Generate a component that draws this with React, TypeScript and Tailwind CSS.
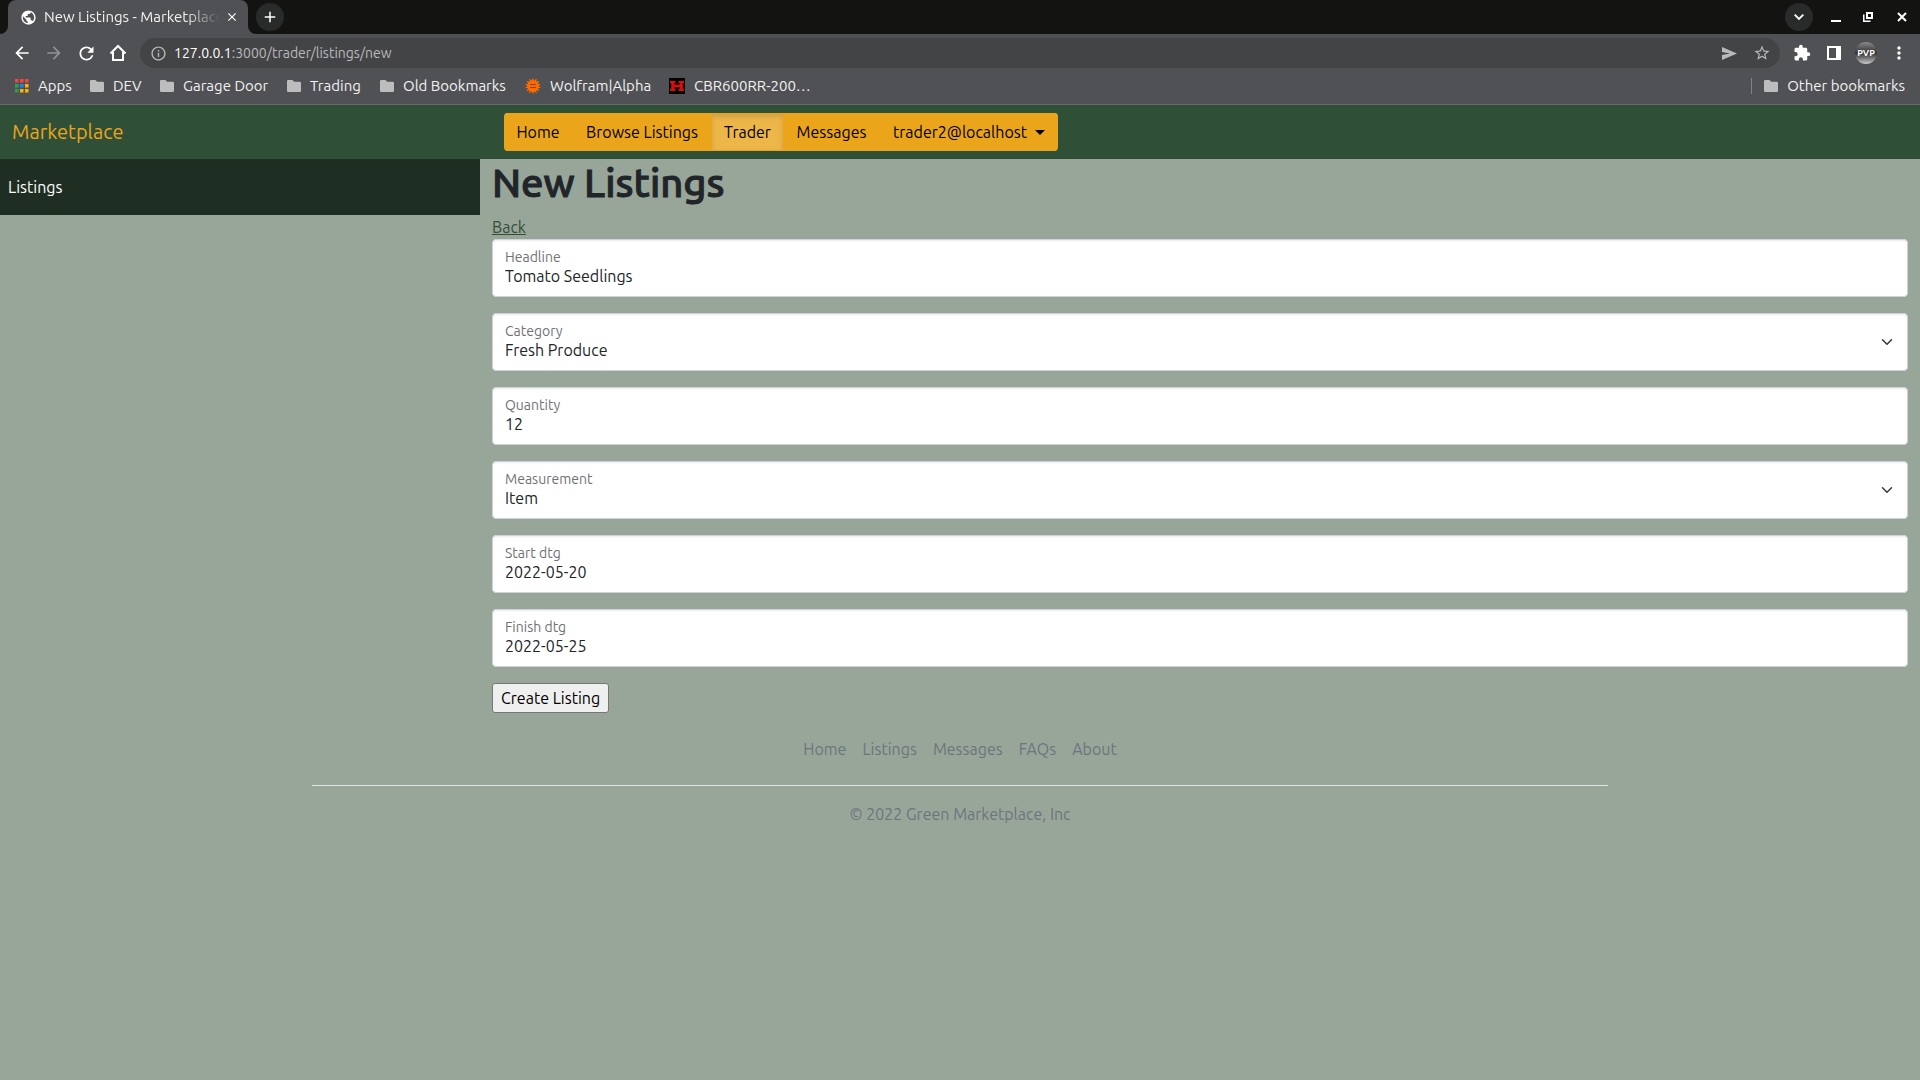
import type { ReactNode } from "react";
import {
  MdAdd,
  MdArrowBack,
  MdArrowForward,
  MdClose,
  MdExtension,
  MdInfoOutline,
  MdMoreVert,
  MdPublic,
  MdRefresh,
  MdStarBorder,
} from "react-icons/md";

function FolderIcon() {
  return (
    <svg width="14" height="12" viewBox="0 0 14 12" fill="#bdbdbd" aria-hidden="true">
      <path d="M1.2 0h4.3l1.6 1.8h5.7A1.2 1.2 0 0 1 14 3v7.8a1.2 1.2 0 0 1-1.2 1.2H1.2A1.2 1.2 0 0 1 0 10.8V1.2A1.2 1.2 0 0 1 1.2 0z" />
    </svg>
  );
}

const appDots = [
  ["#f2453d", "#f2453d", "#f2453d"],
  ["#2ba24c", "#1a82f7", "#fbb208"],
  ["#2ba24c", "#fbb208", "#fbb208"],
];

function AppsIcon() {
  return (
    <svg width="14" height="14" viewBox="0 0 14 14" aria-hidden="true">
      {appDots.map((row, y) =>
        row.map((fill, x) => <rect key={`${x}-${y}`} x={x * 5} y={y * 5} width="3.5" height="3.5" fill={fill} />),
      )}
    </svg>
  );
}

function WolframIcon() {
  const points = Array.from({ length: 28 }, (_, i) => {
    const r = i % 2 === 0 ? 8.2 : 5.4;
    const a = (Math.PI * i) / 14;
    return `${(8 + r * Math.sin(a)).toFixed(2)},${(8 - r * Math.cos(a)).toFixed(2)}`;
  }).join(" ");
  return (
    <svg width="16" height="16" viewBox="0 0 16 16" aria-hidden="true">
      <polygon points={points} fill="#ff6a00" />
      <path d="M5 6.5h6M5 9.500h6" stroke="#8a4510" strokeWidth="1" />
    </svg>
  );
}

function HondaIcon() {
  return (
    <svg width="16" height="16" viewBox="0 0 16 16" aria-hidden="true">
      <rect width="16" height="16" fill="#000" />
      <path
        d="M1 3h5.500v2H5.500v1.800h5V5h-1V3H15v2h-1.200v6H15v2H9.500v-2h1V9h-5v2h1v2H1v-2h1.200V5H1z"
        fill="#e00a0a"
      />
    </svg>
  );
}

function Bookmark({ icon, label, width }: { icon: ReactNode; label: string; width: string }) {
  return (
    <a href="#" className={`flex shrink-0 items-center whitespace-nowrap ${width}`}>
      <span className="flex shrink-0 justify-center">{icon}</span>
      <span className="ml-[9px]">{label}</span>
    </a>
  );
}

function BrowserChrome() {
  return (
    <header className="bg-[#505154] text-[15px] text-[#f1f1f1]">
      <div className="flex h-[34px] items-center bg-[#131411]">
        <div className="flex h-full items-end">
          <svg width="8" height="8" viewBox="0 0 8 8" fill="#505154" aria-hidden="true">
            <path d="M8 0v8H0a8 8 0 0 0 8-8z" />
          </svg>
          <div className="flex h-full w-[240px] items-center rounded-t-lg bg-[#505154] pr-2 pl-3">
            <MdPublic size={17} className="shrink-0 text-white" />
            <span className="ml-[7px] w-[176px] overflow-hidden mask-r-from-80% mask-r-to-100% whitespace-nowrap">
              New Listings - Marketplace
            </span>
            <button type="button" aria-label="Close tab" className="ml-[5px]">
              <MdClose size={14} className="text-white" />
            </button>
          </div>
          <svg width="8" height="8" viewBox="0 0 8 8" fill="#505154" aria-hidden="true">
            <path d="M0 0v8h8a8 8 0 0 1-8-8z" />
          </svg>
        </div>
        <button
          type="button"
          aria-label="New tab"
          className="flex size-7 items-center justify-center rounded-full bg-[#292b2b]"
        >
          <MdAdd size={18} className="text-white" />
        </button>
        <div className="ml-auto flex items-center pr-[13px]">
          <button
            type="button"
            aria-label="Search tabs"
            className="mr-[18px] flex size-7 items-center justify-center rounded-full bg-[#292b2b]"
          >
            <svg width="10" height="6" viewBox="0 0 10 6" fill="none" stroke="#fff" strokeWidth="1.8" aria-hidden="true">
              <path d="M.7.7 5 5 9.3.7" />
            </svg>
          </button>
          <button type="button" aria-label="Minimize" className="mr-[22px]">
            <svg width="10" height="10" viewBox="0 0 10 10" fill="#fff" aria-hidden="true">
              <path d="M0 8h10v2H0z" />
            </svg>
          </button>
          <button type="button" aria-label="Restore" className="mr-6">
            <svg width="10" height="10" viewBox="0 0 10 10" aria-hidden="true">
              <path d="M4 1h5v5H4z" fill="none" stroke="#fff" strokeWidth="2" />
              <path d="M0 2.500h1.500v6H7.500V10H0z" fill="#fff" />
            </svg>
          </button>
          <button type="button" aria-label="Close window">
            <svg width="10" height="10" viewBox="0 0 10 10" stroke="#fff" strokeWidth="2" aria-hidden="true">
              <path d="m1 1 8 8M9 1 1 9" />
            </svg>
          </button>
        </div>
      </div>

      <div className="flex h-[38px] items-center pl-3">
        <div className="flex items-center gap-3 text-white">
          <button type="button" aria-label="Back">
            <MdArrowBack size={20} />
          </button>
          <button type="button" aria-label="Forward" className="text-[#929294]">
            <MdArrowForward size={20} />
          </button>
          <button type="button" aria-label="Reload">
            <MdRefresh size={21} />
          </button>
          <button type="button" aria-label="Home page">
            <svg width="18" height="18" viewBox="0 0 18 18" fill="none" stroke="#fff" strokeWidth="2" aria-hidden="true">
              <path d="M1.500 9.500 9 2l7.500 7.500M4 8v8h10V8" />
            </svg>
          </button>
        </div>
        <div className="ml-[13px] flex h-[30px] flex-1 items-center rounded-full bg-[#434446] pr-[9px] pl-2.5 text-[14px]">
          <MdInfoOutline size={17} className="text-[#b5b6b8]" />
          <p className="ml-[7px] flex-1 text-[#b9babc]">
            <span className="text-white">127.0.0.1</span>:3000/trader/listings/new
          </p>
          <button type="button" aria-label="Share this page" className="mr-4">
            <svg width="15" height="13" viewBox="0 0 15 13" fill="#b9b9ba" aria-hidden="true">
              <path d="M0 0l15 6.500L0 13V8l8-1.500L0 5z" />
            </svg>
          </button>
          <button type="button" aria-label="Bookmark this page">
            <MdStarBorder size={18} className="text-[#b9b9ba]" />
          </button>
        </div>
        <div className="flex items-center pr-[11px] pl-[13px]">
          <button type="button" aria-label="Extensions">
            <MdExtension size={18} className="text-white" />
          </button>
          <button type="button" aria-label="Side panel" className="ml-4">
            <svg width="14" height="14" viewBox="0 0 14 14" aria-hidden="true">
              <path d="M0 0h14v14H0zM2 2v10h7V2z" fill="#fff" fillRule="evenodd" />
            </svg>
          </button>
          <button
            type="button"
            aria-label="Profile"
            className="ml-3.5 flex size-[22px] items-center justify-center rounded-full bg-linear-to-b from-[#8a8a8a] via-[#333] to-[#ccc] text-[9px] font-bold text-white"
          >
            PVP
          </button>
          <button type="button" aria-label="Menu" className="ml-3">
            <MdMoreVert size={20} className="text-white" />
          </button>
        </div>
      </div>

      <nav
        aria-label="Bookmarks"
        className="flex h-[33px] items-center border-b border-[#66686a] pr-[15px] pb-1 pl-[15px]"
      >
        <Bookmark icon={<AppsIcon />} label="Apps" width="w-[75px]" />
        <Bookmark icon={<FolderIcon />} label="DEV" width="w-[70px]" />
        <Bookmark icon={<FolderIcon />} label="Garage Door" width="w-[127px]" />
        <Bookmark icon={<FolderIcon />} label="Trading" width="w-[93px]" />
        <Bookmark icon={<FolderIcon />} label="Old Bookmarks" width="w-[145px]" />
        <Bookmark icon={<WolframIcon />} label="Wolfram|Alpha" width="w-[144px]" />
        <Bookmark icon={<HondaIcon />} label="CBR600RR-200…" width="w-[140px]" />
        <span className="mr-3 ml-auto h-4 w-px bg-[#808184]" />
        <Bookmark icon={<FolderIcon />} label="Other bookmarks" width="w-auto" />
      </nav>
    </header>
  );
}

const navButton = "flex items-center justify-center whitespace-nowrap border-y border-[#eba51b] h-full";

function SiteNav() {
  return (
    <div className="flex h-[54px] items-center bg-[#304f37]">
      <div className="w-1/4 pl-3">
        <a href="#" className="text-[20px] text-[#eba51b]">
          Marketplace
        </a>
      </div>
      <nav
        aria-label="Main"
        className="ml-6 flex h-[38px] overflow-hidden rounded bg-[#eba51b] text-black inset-shadow-[0_1px_0_rgba(255,255,255,0.15)]"
      >
        <a href="#" className={`w-[68px] ${navButton}`}>
          Home
        </a>
        <a href="#" className={`w-[140px] ${navButton}`}>
          Browse Listings
        </a>
        <a
          href="#"
          aria-current="page"
          className={`w-[71px] bg-[#edb649] inset-shadow-[0_3px_5px_rgba(0,0,0,0.125)] ${navButton}`}
        >
          Trader
        </a>
        <a href="#" className={`w-[97px] ${navButton}`}>
          Messages
        </a>
        <button type="button" aria-haspopup="menu" className={`w-[178px] gap-2 ${navButton}`}>
          trader2@localhost
          <svg width="10" height="5" viewBox="0 0 10 5" aria-hidden="true">
            <path d="M0 0h10L5 5z" />
          </svg>
        </button>
      </nav>
    </div>
  );
}

const control =
  "block h-[58px] w-full appearance-none rounded border border-[#ced4da] bg-white px-3 pt-[26px] pb-2.5 leading-5 text-[#212529] outline-none inset-shadow-[0_1px_2px_rgba(0,0,0,0.075)]";

function Field({ id, label, value, options }: { id: string; label: string; value: string; options?: string[] }) {
  return (
    <div className="relative">
      {options ? (
        <>
          <select id={id} defaultValue={value} className={control}>
            {options.map((o) => (
              <option key={o}>{o}</option>
            ))}
          </select>
          <svg
            className="pointer-events-none absolute inset-y-0 right-[15px] my-auto"
            width="12"
            height="12"
            viewBox="0 0 16 16"
            fill="none"
            stroke="#343a40"
            strokeWidth="2"
            strokeLinecap="round"
            strokeLinejoin="round"
            aria-hidden="true"
          >
            <path d="m2 5 6 6 6-6" />
          </svg>
        </>
      ) : (
        <input id={id} type="text" defaultValue={value} className={control} />
      )}
      <label htmlFor={id} className="absolute top-2 left-[13px] text-[14px] leading-5 text-[#6f7274]">
        {label}
      </label>
    </div>
  );
}

export default function App() {
  return (
    <div className="flex min-h-screen flex-col bg-[#98a69a] font-['Ubuntu','Noto_Sans',sans-serif] text-[16px] leading-6 text-[#212529]">
      <BrowserChrome />
      <SiteNav />
      <div className="flex">
        <aside className="w-1/4">
          <a href="#" className="block bg-[#1e2e22] p-4 pl-2 text-white">
            Listings
          </a>
        </aside>
        <main className="w-3/4 px-3">
          <h1 className="mb-2 text-[40px] leading-[48px] font-medium [-webkit-text-stroke:1px_#212529]">
            New Listings
          </h1>
          <a href="#" className="block w-fit text-[#304f37] underline">
            Back
          </a>
          <form className="flex flex-col gap-4" onSubmit={(e) => e.preventDefault()}>
            <Field id="headline" label="Headline" value="Tomato Seedlings" />
            <Field id="category" label="Category" value="Fresh Produce" options={["Fresh Produce"]} />
            <Field id="quantity" label="Quantity" value="12" />
            <Field id="measurement" label="Measurement" value="Item" options={["Item"]} />
            <Field id="start" label="Start dtg" value="2022-05-20" />
            <Field id="finish" label="Finish dtg" value="2022-05-25" />
            <button
              type="submit"
              className="h-[30px] self-start rounded-[3px] border border-[#767676] bg-[#efefef] px-2 text-black"
            >
              Create Listing
            </button>
          </form>
        </main>
      </div>
      <footer className="mx-auto mt-6 w-full max-w-[1296px] text-center text-[#6c757d]">
        <nav aria-label="Footer" className="flex justify-center gap-4 border-b border-[#dee2e6] pb-6">
          <a href="#">Home</a>
          <a href="#">Listings</a>
          <a href="#">Messages</a>
          <a href="#">FAQs</a>
          <a href="#">About</a>
        </nav>
        <p className="mt-4">© 2022 Green Marketplace, Inc</p>
      </footer>
    </div>
  );
}
